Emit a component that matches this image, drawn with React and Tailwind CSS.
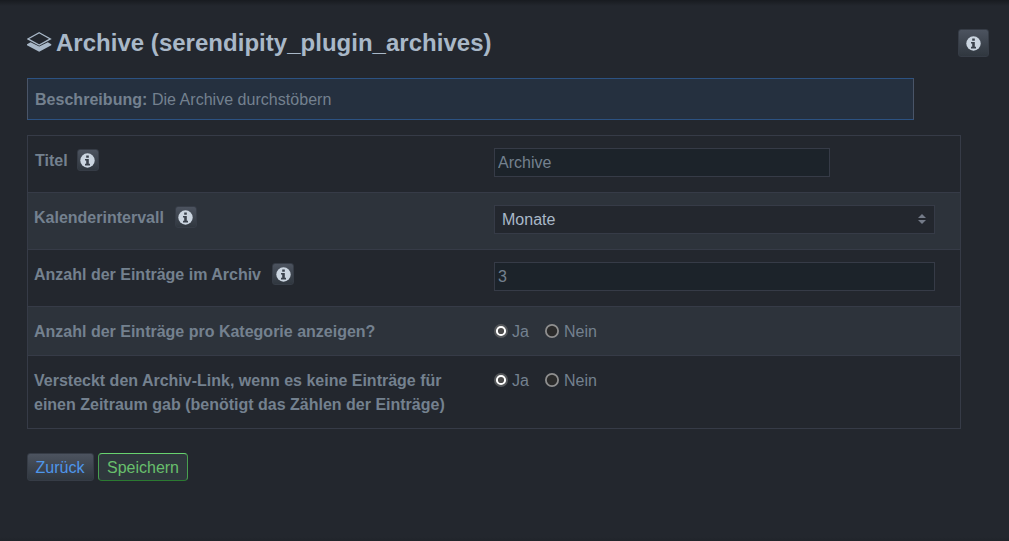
function InfoIcon() {
  return (
    <svg width="15" height="15" viewBox="0 0 15 15" className="shrink-0">
      <circle cx="7.5" cy="7.5" r="7.2" fill="#cbd5e0" />
      <path d="M6.2 2.5 H8.8 V4.7 H6.2 Z M5 6 H8.8 V10.7 H10 V12.4 H5 V10.7 H6.2 V7.5 H5 Z" fill="#3b424c" />
    </svg>
  );
}

function InfoButton({ className }) {
  return (
    <button
      type="button"
      aria-label="Info"
      className={`flex shrink-0 items-center justify-center rounded-[3px] border border-[#363c46] bg-linear-to-b from-[#4c535f] to-[#30373f] ${className}`}
    >
      <InfoIcon />
    </button>
  );
}

function LayersIcon() {
  return (
    <svg width="25" height="20" viewBox="0 0 25 20" fill="none" className="-mt-0.5 shrink-0">
      <path d="M12.2 0.8 L23.4 6.9 L12.2 13 L0.9 6.9 Z" stroke="#a9b8c8" strokeWidth="1.3" />
      <path d="M0 12.3 L3.6 10.2 L12.2 14.6 L20.8 10.2 L24.3 12.3 V13.2 L12.2 19.8 L0 13.2 Z" fill="#a9b8c8" />
    </svg>
  );
}

function Row({ label, info, shaded, first, children }) {
  return (
    <div className={`flex border-b border-[#363b47] ${shaded ? "bg-[#2d333b]" : ""}`}>
      <div className={`flex w-[466px] shrink-0 pt-[13px] pb-[11px] font-bold ${first ? "pl-[7px]" : "pl-[6px]"}`}>
        <span className="w-max max-w-[420px]">{label}</span>
        {info && <InfoButton className={`size-[22px] ${first ? "ml-[9px]" : "ml-[11px]"}`} />}
      </div>
      <div className="w-[441px] py-3">{children}</div>
    </div>
  );
}

function Radio({ checked }) {
  return (
    <svg width="14" height="14" viewBox="0 0 14 14" className="shrink-0">
      {checked ? (
        <>
          <circle cx="7" cy="7" r="7" fill="#55585b" />
          <circle cx="7" cy="7" r="4.1" fill="#4b4b4b" stroke="#fff" strokeWidth="2" />
        </>
      ) : (
        <circle cx="7" cy="7" r="6.1" fill="#2b2b2b" stroke="#8f8f8f" strokeWidth="1.8" />
      )}
    </svg>
  );
}

function YesNo() {
  return (
    <div className="flex h-6 items-center">
      <Radio checked />
      <span className="mt-0.5 ml-[4px] w-[33px]">Ja</span>
      <Radio />
      <span className="mt-0.5 ml-[5px]">Nein</span>
    </div>
  );
}

export default function App() {
  return (
    <div className="h-[541px] bg-[#23272e] bg-[linear-gradient(#181b20,#23272e_6px,#23272e_537px,#20242a)] pt-[25px] pr-5 pl-[27px] font-['Liberation_Sans',Arial,sans-serif] text-base leading-6 text-[#74818f]">
      <header className="flex h-9 items-start justify-between">
        <h1 className="flex h-9 items-center text-2xl leading-9 font-bold text-[#a9b8c8]">
          <LayersIcon />
          <span className="ml-[4px] tracking-[0.02px]">Archive (serendipity_plugin_archives)</span>
        </h1>
        <InfoButton className="mt-1 h-7 w-[31px]" />
      </header>

      <div className="mt-[17px] h-[42px] w-[887px] border border-x-[#4a5568] border-y-[#2c5282] bg-[#25303f] px-[7px] pt-[9px] tracking-[0.03px]">
        <b>Beschreibung:</b> Die Archive durchstöbern
      </div>

      <div className="mt-[15px] w-[934px] border border-b-0 border-[#363b47]">
        <Row label="Titel" info first>
          <input
            defaultValue="Archive"
            className="mb-[3px] block h-[29px] w-[336px] border border-[#363b47] bg-[#1c232a] px-[3px] outline-none"
          />
        </Row>
        <Row label="Kalenderintervall" info shaded>
          <div className="mb-[3px] flex h-[29px] w-[441px] items-center justify-between border border-[#363b47] bg-[#23272e] pr-[8px] pl-[7px] text-[#a9b8c8]">
            <span>Monate</span>
            <svg width="8" height="10" viewBox="0 0 8 10" fill="#747b88" className="-mt-px">
              <path d="M4 0 L8 4 H0 Z M0 6 H8 L4 10 Z" />
            </svg>
          </div>
        </Row>
        <Row label="Anzahl der Einträge im Archiv" info>
          <input
            defaultValue="3"
            className="mb-[3px] block h-[29px] w-[441px] border border-[#363b47] bg-[#1c232a] px-[3px] outline-none"
          />
        </Row>
        <Row label="Anzahl der Einträge pro Kategorie anzeigen?" shaded>
          <YesNo />
        </Row>
        <Row label="Versteckt den Archiv-Link, wenn es keine Einträge für einen Zeitraum gab (benötigt das Zählen der Einträge)">
          <YesNo />
        </Row>
      </div>

      <div className="mt-6 flex gap-1">
        <button
          type="button"
          className="h-7 w-[67px] rounded-[3px] border border-[#363c46] bg-linear-to-b from-[#4c535f] to-[#30373f] pt-[2px] pr-px leading-6 text-[#4e96ea]"
        >
          Zurück
        </button>
        <button
          type="button"
          className="h-7 w-[90px] rounded-[4px] border border-t-[#68d36f] border-r-[#48a050] border-b-[#2b7a31] border-l-[#48a050] bg-[#2f373d] pt-[2px] leading-6 text-[#68bf6c]"
        >
          Speichern
        </button>
      </div>
    </div>
  );
}
